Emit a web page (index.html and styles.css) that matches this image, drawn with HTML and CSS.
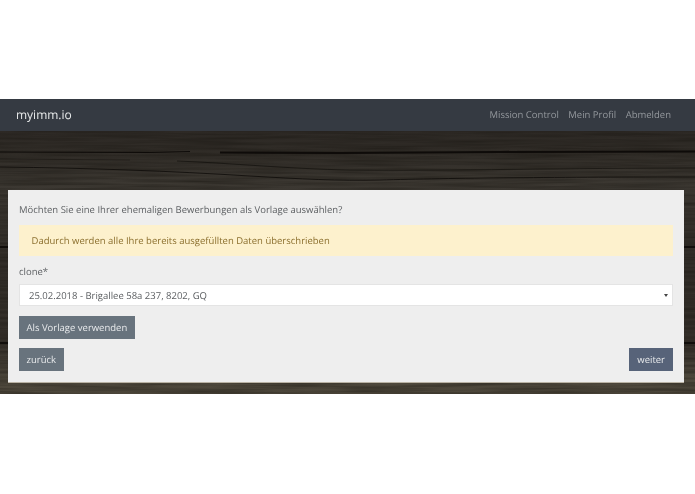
FILE: index.html
```html
<!DOCTYPE html>
<html lang="de">
<head>
<meta charset="UTF-8">
<title>myimm.io</title>
<link rel="stylesheet" href="styles.css">
</head>
<body>
<div class="page">
    <nav class="navbar">
        <a class="brand" href="#">myimm.io</a>
        <div class="nav-links">
            <a href="#">Mission Control</a>
            <a href="#">Mein Profil</a>
            <a href="#">Abmelden</a>
        </div>
    </nav>
    <main class="wood">
        <svg class="grain" width="695" height="263" viewBox="0 131 695 263" aria-hidden="true">
            <defs>
                <linearGradient id="shade" x1="0" y1="0" x2="0" y2="1">
                    <stop offset="0" stop-color="#2d2925"/>
                    <stop offset="0.08" stop-color="#302c27"/>
                    <stop offset="0.2" stop-color="#3c3832"/>
                    <stop offset="0.5" stop-color="#322e29"/>
                    <stop offset="0.8" stop-color="#35302a"/>
                    <stop offset="0.95" stop-color="#4f493d"/>
                    <stop offset="1" stop-color="#4c463a"/>
                </linearGradient>
                <filter id="streaks" x="0" y="0" width="100%" height="100%" color-interpolation-filters="sRGB">
                    <feTurbulence type="fractalNoise" baseFrequency="0.012 0.35" numOctaves="3" seed="7"/>
                    <feColorMatrix type="matrix" values="0 0 0 0 0.08  0 0 0 0 0.07  0 0 0 0 0.05  0.7 0 0 0 -0.2"/>
                </filter>
            </defs>
            <rect x="0" y="131" width="695" height="263" fill="url(#shade)"/>
            <rect x="0" y="131" width="695" height="263" filter="url(#streaks)"/>
            <g fill="none" stroke="#0e0b09">
                <path d="M0 152 L150 152.5 L190 151.5" stroke-width="1"/>
                <path d="M220 152.5 L340 153 L500 152 L695 151.5" stroke-width="2.2"/>
                <path d="M0 167 C90 168 170 171 250 176 C300 179 340 181 380 180 C450 178 560 177 695 177" stroke-width="1" opacity="0.8"/>
                <path d="M177 161 C230 163 290 169 350 170 C450 171 570 168 695 168" stroke-width="1" opacity="0.6"/>
                <path d="M0 159 L130 160" stroke-width="1" opacity="0.35"/>
                <path d="M0 247 L695 247" stroke-width="2" opacity="0.9"/>
                <path d="M0 343 L695 343" stroke-width="2" opacity="0.9"/>
            </g>
        </svg>
        <form class="card">
            <p class="question">Möchten Sie eine Ihrer ehemaligen Bewerbungen als Vorlage auswählen?</p>
            <div class="alert">Dadurch werden alle Ihre bereits ausgefüllten Daten überschrieben</div>
            <label class="label" for="clone">clone*</label>
            <div class="select">
                <span id="clone">25.02.2018 - Brigallee 58a 237, 8202, GQ</span>
                <span class="caret"></span>
            </div>
            <button type="button" class="btn btn-grey btn-template">Als Vorlage verwenden</button>
            <div class="actions">
                <button type="button" class="btn btn-grey btn-back">zurück</button>
                <button type="button" class="btn btn-blue">weiter</button>
            </div>
        </form>
    </main>
</div>
</body>
</html>
```

FILE: styles.css
```css
* {
    box-sizing: border-box;
}
body {
    margin: 0;
    background-color: #fff;
    font-family: "Open Sans", "Noto Sans", Arial, sans-serif;
    font-size: 9.5px;
    text-rendering: geometricPrecision;
    color: #5c5f62;
}
.page {
    padding-top: 99px;
    filter: blur(0.3px);
}
.navbar {
    display: flex;
    justify-content: space-between;
    align-items: center;
    height: 32px;
    padding: 0 24px 2px 16px;
    background-color: #353a42;
}
.navbar a {
    text-decoration: none;
}
.brand {
    font-size: 12px;
    font-weight: 500;
    color: #e9ebec;
}
.nav-links {
    display: flex;
    gap: 9.5px;
}
.nav-links a {
    color: #94989d;
}
.wood {
    position: relative;
    height: 263px;
    padding: 59px 11px 12px 8px;
    background-color: #3a332b;
}
.grain {
    position: absolute;
    top: 0;
    left: 0;
}
.card {
    position: relative;
    height: 193px;
    padding: 12px 11px 0;
    background-color: #eee;
    border-bottom: 1px solid #b9b2a4;
}
.question {
    margin: 0 0 7px;
    line-height: 16px;
}
.alert {
    height: 31px;
    margin-bottom: 8px;
    padding-left: 12.5px;
    line-height: 31px;
    background-color: #fdf1cd;
    color: #8b6f2e;
}
.label {
    display: block;
    line-height: 16px;
    margin-bottom: 4px;
}
.select {
    display: flex;
    justify-content: space-between;
    align-items: center;
    height: 22px;
    padding: 0 4px 0 9px;
    background-color: #fff;
    border: 1px solid #e4e4e4;
}
.caret {
    width: 0;
    height: 0;
    border-left: 2px solid transparent;
    border-right: 2px solid transparent;
    border-top: 3px solid #444;
}
.btn {
    height: 23px;
    padding: 0 8px;
    border: none;
    font-family: inherit;
    font-size: 9.5px;
    text-rendering: geometricPrecision;
    color: #e8eaec;
}
.btn-grey {
    background-color: #68737d;
}
.btn-blue {
    background-color: #576379;
}
.btn-template {
    display: block;
    margin-top: 10px;
    padding: 0 7.5px;
}
.btn-back {
    padding: 0 7.5px;
}
.actions {
    display: flex;
    justify-content: space-between;
    margin-top: 9px;
}
```
